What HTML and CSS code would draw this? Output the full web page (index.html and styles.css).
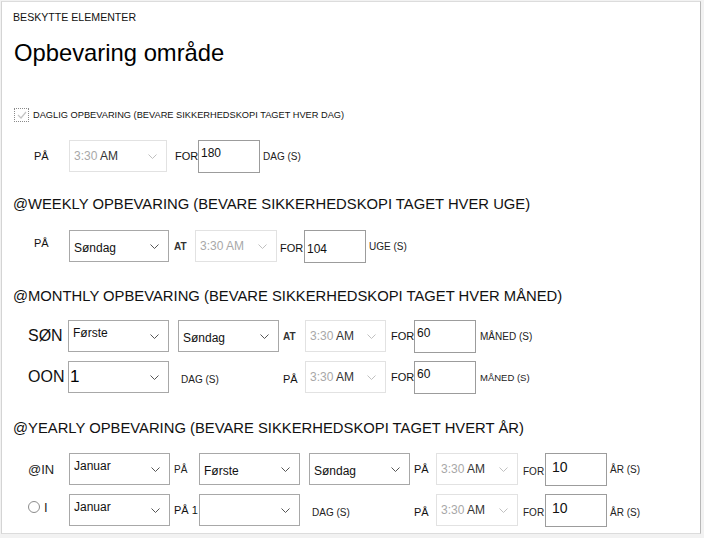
FILE: index.html
```html
<!DOCTYPE html>
<html>
<head>
<meta charset="utf-8">
<link rel="stylesheet" href="styles.css">
</head>
<body>
<div class="panel">
  <div class="crumb">BESKYTTE ELEMENTER</div>
  <h1 class="title">Opbevaring område</h1>

  <div class="check-row">
    <span class="checkbox"><svg width="12" height="10" viewBox="0 0 12 10"><path d="M2 5 L5 8 L10 2" fill="none" stroke="#c4c4c4" stroke-width="1.2"/></svg></span>
    <span class="check-label">DAGLIG OPBEVARING (BEVARE SIKKERHEDSKOPI TAGET HVER DAG)</span>
  </div>

  <div class="row r1">
    <span class="lbl w35">PÅ</span>
    <div class="sel dis w98"><span class="val"><span class="g">3:30</span> <span class="am">AM</span></span><svg class="chev" width="9" height="5" viewBox="0 0 9 5"><path d="M0.5 0.5 L4.5 4.5 L8.5 0.5" fill="none" stroke="#c0c0c0"/></svg></div>
    <span class="lbl ml8 w23">FOR</span>
    <div class="inp w62"><span class="ival">180</span></div>
    <span class="unit ml3">DAG (S)</span>
  </div>

  <h2 class="sec s-week">@WEEKLY OPBEVARING (BEVARE SIKKERHEDSKOPI TAGET HVER UGE)</h2>

  <div class="row r2">
    <span class="lbl w35 up">PÅ</span>
    <div class="sel w100"><span class="val low">Søndag</span><svg class="chev" width="9" height="5" viewBox="0 0 9 5"><path d="M0.5 0.5 L4.5 4.5 L8.5 0.5" fill="none" stroke="#555"/></svg></div>
    <span class="lbl b ml5 w21">AT</span>
    <div class="sel dis w82"><span class="val"><span class="g">3:30 AM</span></span><svg class="chev" width="9" height="5" viewBox="0 0 9 5"><path d="M0.5 0.5 L4.5 4.5 L8.5 0.5" fill="none" stroke="#c0c0c0"/></svg></div>
    <span class="lbl ml3 w24 low">FOR</span>
    <div class="inp w62"><span class="ival low">104</span></div>
    <span class="unit ml3">UGE (S)</span>
  </div>

  <h2 class="sec s-month">@MONTHLY OPBEVARING (BEVARE SIKKERHEDSKOPI TAGET HVER MÅNED)</h2>

  <div class="row r3">
    <span class="big w40">SØN</span>
    <div class="sel w101"><span class="val up">Første</span><svg class="chev" width="9" height="5" viewBox="0 0 9 5"><path d="M0.5 0.5 L4.5 4.5 L8.5 0.5" fill="none" stroke="#555"/></svg></div>
    <div class="sel w101 ml9"><span class="val low">Søndag</span><svg class="chev" width="9" height="5" viewBox="0 0 9 5"><path d="M0.5 0.5 L4.5 4.5 L8.5 0.5" fill="none" stroke="#555"/></svg></div>
    <span class="lbl b ml4 w22">AT</span>
    <div class="sel dis w81"><span class="val"><span class="g">3:30</span> <span class="am">AM</span></span><svg class="chev" width="9" height="5" viewBox="0 0 9 5"><path d="M0.5 0.5 L4.5 4.5 L8.5 0.5" fill="none" stroke="#c0c0c0"/></svg></div>
    <span class="lbl ml5 w23">FOR</span>
    <div class="inp w62"><span class="ival">60</span></div>
    <span class="unit ml4">MÅNED (S)</span>
  </div>

  <div class="row r4">
    <span class="big w40">OON</span>
    <div class="sel w101"><span class="val one">1</span><svg class="chev" width="9" height="5" viewBox="0 0 9 5"><path d="M0.5 0.5 L4.5 4.5 L8.5 0.5" fill="none" stroke="#555"/></svg></div>
    <span class="unit ml12 w102 low">DAG (S)</span>
    <span class="lbl w22 low">PÅ</span>
    <div class="sel dis w81"><span class="val"><span class="g">3:30</span> <span class="am">AM</span></span><svg class="chev" width="9" height="5" viewBox="0 0 9 5"><path d="M0.5 0.5 L4.5 4.5 L8.5 0.5" fill="none" stroke="#c0c0c0"/></svg></div>
    <span class="lbl ml5 w23">FOR</span>
    <div class="inp w62"><span class="ival">60</span></div>
    <span class="unit sm ml4">MÅNED (S)</span>
  </div>

  <h2 class="sec s-year">@YEARLY OPBEVARING (BEVARE SIKKERHEDSKOPI TAGET HVERT ÅR)</h2>

  <div class="row r5">
    <span class="mid w41">@IN</span>
    <div class="sel w101"><span class="val up">Januar</span><svg class="chev" width="9" height="5" viewBox="0 0 9 5"><path d="M0.5 0.5 L4.5 4.5 L8.5 0.5" fill="none" stroke="#555"/></svg></div>
    <span class="unit ml4 w25">PÅ</span>
    <div class="sel w101"><span class="val low">Første</span><svg class="chev" width="9" height="5" viewBox="0 0 9 5"><path d="M0.5 0.5 L4.5 4.5 L8.5 0.5" fill="none" stroke="#555"/></svg></div>
    <div class="sel w101 ml9"><span class="val low">Søndag</span><svg class="chev" width="9" height="5" viewBox="0 0 9 5"><path d="M0.5 0.5 L4.5 4.5 L8.5 0.5" fill="none" stroke="#555"/></svg></div>
    <span class="lbl ml4 w22">PÅ</span>
    <div class="sel dis w82"><span class="val"><span class="g">3:30</span> <span class="am">AM</span></span><svg class="chev" width="9" height="5" viewBox="0 0 9 5"><path d="M0.5 0.5 L4.5 4.5 L8.5 0.5" fill="none" stroke="#c0c0c0"/></svg></div>
    <span class="unit ml5 w22 low">FOR</span>
    <div class="inp w62"><span class="ival big2">10</span></div>
    <span class="unit ml3">ÅR (S)</span>
  </div>

  <div class="row r6">
    <span class="radio-wrap w41"><span class="radio"></span><span class="mid ml4">I</span></span>
    <div class="sel w101"><span class="val up">Januar</span><svg class="chev" width="9" height="5" viewBox="0 0 9 5"><path d="M0.5 0.5 L4.5 4.5 L8.5 0.5" fill="none" stroke="#555"/></svg></div>
    <span class="lbl ml4 w25">PÅ 1</span>
    <div class="sel w101"><span class="val"></span><svg class="chev" width="9" height="5" viewBox="0 0 9 5"><path d="M0.5 0.5 L4.5 4.5 L8.5 0.5" fill="none" stroke="#555"/></svg></div>
    <span class="unit ml12 w102 low">DAG (S)</span>
    <span class="lbl w22 low">PÅ</span>
    <div class="sel dis w82"><span class="val"><span class="g">3:30</span> <span class="am">AM</span></span><svg class="chev" width="9" height="5" viewBox="0 0 9 5"><path d="M0.5 0.5 L4.5 4.5 L8.5 0.5" fill="none" stroke="#c0c0c0"/></svg></div>
    <span class="unit ml5 w22 low">FOR</span>
    <div class="inp w62"><span class="ival big2">10</span></div>
    <span class="unit ml3 low">ÅR (S)</span>
  </div>
</div>
</body>
</html>
```

FILE: styles.css
```css
html, body {
  margin: 0;
  padding: 0;
  background: #f2f2f2;
}
body {
  font-family: "Liberation Sans", Arial, sans-serif;
  color: #111;
  width: 704px;
  height: 538px;
  overflow: hidden;
}
.panel {
  margin: 1px 0 0 1px;
  width: 700px;
  height: 533px;
  background: #fff;
  border-top: 1px solid #dcdcdc;
  border-left: 1px solid #d4d4d4;
  border-right: 1px solid #b8b8b8;
  border-bottom: 1px solid #dcdcdc;
  box-sizing: border-box;
  padding-left: 11px;
}
.crumb {
  font-size: 10.6px;
  line-height: 14px;
  margin-top: 8px;
  color: #111;
}
.title {
  font-weight: normal;
  font-size: 23.8px;
  line-height: 28px;
  margin: 15px 0 0 1px;
  color: #000;
}
.check-row {
  display: flex;
  align-items: center;
  margin-top: 41px;
  margin-left: 1px;
  height: 14px;
}
.checkbox {
  border: 1px dotted #8a8a8a;
  display: flex;
  align-items: center;
  justify-content: center;
  box-sizing: border-box;
  width: 15px;
  height: 14px;
}
.check-label {
  font-size: 9.25px;
  margin-left: 4px;
  color: #111;
}
.row {
  display: flex;
  align-items: center;
  height: 32px;
}
.r1 { margin-top: 18px; padding-left: 21px; }
.r2 { margin-top: 17px; padding-left: 21px; }
.r3 { margin-top: 15px; padding-left: 15px; }
.r4 { margin-top: 9px; padding-left: 15px; }
.r5 { margin-top: 16px; padding-left: 15px; }
.r6 { margin-top: 9px; padding-left: 15px; }

.sec {
  font-weight: normal;
  font-size: 14.8px;
  line-height: 18px;
  margin: 0;
  color: #111;
}
.s-week { margin-top: 23px; }
.s-month { margin-top: 25px; }
.s-year { margin-top: 26px; }

.lbl { font-size: 11px; flex: none; }
.b { font-weight: bold; font-size: 10px; color: #333; }
.unit { font-size: 10px; flex: none; color: #222; }
.unit.sm { font-size: 9.5px; }
.big { font-size: 16px; flex: none; color: #111; }
.mid { font-size: 13px; flex: none; color: #222; }
.up { position: relative; top: -3px; }
.low { position: relative; top: 2px; }

.sel {
  flex: none;
  height: 32px;
  box-sizing: border-box;
  border: 1px solid #a8a8a8;
  display: flex;
  align-items: center;
  justify-content: space-between;
  padding: 0 9px 0 4px;
  background: #fff;
}
.sel .val { font-size: 12px; color: #111; }
.sel .val.one { font-size: 17px; position: relative; left: -3px; color: #000; }
.sel.dis { border-color: #e2e2e2; }
.sel .g { color: #a8a8a8; }
.sel .am { color: #333; }
.chev { flex: none; }

.inp {
  flex: none;
  height: 33px;
  box-sizing: border-box;
  border: 1px solid #9c9c9c;
  display: flex;
  align-items: center;
  padding-left: 2px;
}
.ival { font-size: 12px; color: #111; position: relative; top: -3px; }
.ival.low { top: 3px; }
.ival.big2 { font-size: 14px; padding-left: 4px; top: -2px; }

.radio-wrap { display: flex; align-items: center; flex: none; position: relative; top: -3px; }
.radio {
  width: 12px;
  height: 12px;
  border: 1px solid #8c8c8c;
  border-radius: 50%;
  box-sizing: border-box;
  flex: none;
}

.w21 { width: 21px; }
.w22 { width: 22px; }
.w23 { width: 23px; }
.w24 { width: 24px; }
.w25 { width: 25px; }
.w35 { width: 35px; }
.w40 { width: 40px; }
.w41 { width: 41px; }
.w62 { width: 62px; }
.w81 { width: 81px; }
.w82 { width: 82px; }
.w98 { width: 98px; }
.w100 { width: 100px; }
.w101 { width: 101px; }
.w102 { width: 102px; }
.ml3 { margin-left: 3px; }
.ml4 { margin-left: 4px; }
.ml5 { margin-left: 5px; }
.ml8 { margin-left: 8px; }
.ml9 { margin-left: 9px; }
.ml12 { margin-left: 12px; }
```
